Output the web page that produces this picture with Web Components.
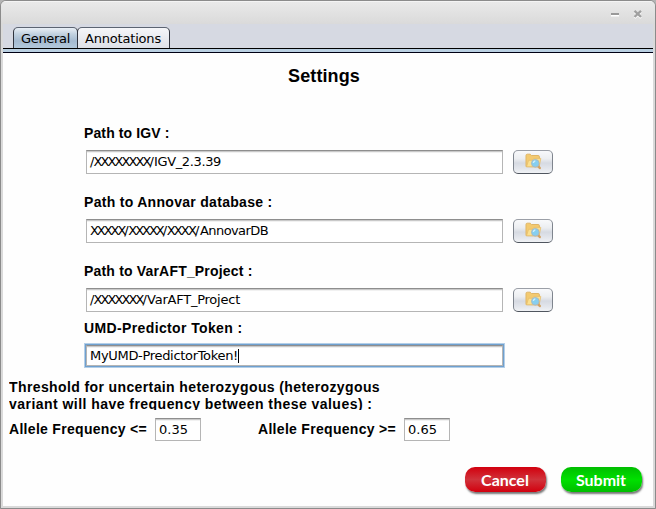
<!DOCTYPE html>
<html lang="en">
<head>
<meta charset="utf-8">
<title>Settings</title>
<style>
html,body{margin:0;height:100%;overflow:hidden;background:#b4b4b4}
</style>
</head>
<body>
<settings-window></settings-window>
<script>
class BaseElement extends HTMLElement {
  constructor() {
    super();
    this.attachShadow({ mode: 'open' }).innerHTML = this.render();
  }
}

/* One line of text; letter spacing is adjusted so that it spans the "span" attribute's width. */
customElements.define('fit-text', class extends BaseElement {
  render() {
    return `<style>:host{display:block;white-space:pre}span{display:inline-block}</style><span><slot></slot></span>`;
  }
  connectedCallback() {
    const want = parseFloat(this.getAttribute('span'));
    const s = this.shadowRoot.querySelector('span');
    const n = this.textContent.length;
    if (want && n) s.style.letterSpacing = ((want - s.getBoundingClientRect().width) / n).toFixed(3) + 'px';
  }
});

customElements.define('window-bar', class extends BaseElement {
  render() {
    return `<style>
    :host{display:flex;box-sizing:border-box;height:23px;justify-content:flex-end;padding:6px 11px 0 0;gap:11px;background:linear-gradient(#fff 0,#e9e9e9 1px,#dadada)}
    svg{display:block;width:12px;height:14px}
    </style>
    <svg viewBox="0 0 12 14"><path d="M2 8.5h8" stroke="#fff" stroke-width="2"/><path d="M2 7h8" stroke="#999" stroke-width="2"/></svg>
    <svg viewBox="0 0 12 14"><path d="M2.5 4.8l6.5 6.2M9 4.8l-6.5 6.2" stroke="#fff" stroke-width="2.3"/><path d="M2.5 3.8l6.5 6.2M9 3.8l-6.5 6.2" stroke="#a0a0a0" stroke-width="2.3"/></svg>`;
  }
});

customElements.define('tab-item', class extends BaseElement {
  render() {
    return `<style>
    :host{display:block;box-sizing:border-box;height:21px;border:1px solid #30343e;border-top-color:#5c6472;border-bottom:0;border-radius:5px 5px 0 0;padding:3px 0 0 7px;font:13px/16px "DejaVu Sans",sans-serif;color:#000;background:linear-gradient(#f5f6f9,#dde0e7)}
    :host([selected]){background:linear-gradient(#e9eff6 0,#c3d2e0 30%,#a4bad0 65%,#b3c9dc)}
    </style><slot></slot>`;
  }
});

customElements.define('tab-strip', class extends BaseElement {
  render() {
    return `<style>
    :host{display:flex;box-sizing:border-box;height:29px;padding:3px 0 0 10px;background:linear-gradient(#d6d9e2 24px,#000 24px 25px,#bad0e2 25px 28px,#000014 28px)}
    tab-item{width:93px;margin-left:-1px}
    tab-item[selected]{width:65px;margin-left:0}
    </style><tab-item selected><fit-text span="49">General</fit-text></tab-item><tab-item><fit-text span="76">Annotations</fit-text></tab-item>`;
  }
});

customElements.define('field-label', class extends BaseElement {
  render() {
    return `<style>:host{display:block;height:17px;font:bold 14px/17px "Liberation Sans",Arial,sans-serif;color:#000}</style><slot></slot>`;
  }
});

customElements.define('text-field', class extends BaseElement {
  render() {
    return `<style>
    :host{display:flex;box-sizing:border-box;height:24px;border:1px solid #b5b5b5;border-top-color:#8e8e8e;padding:3px 0 0 3px;background:linear-gradient(#c9c9c9 0 1px,#f1f1f1 1px 2px,#fff 2px);font:13px/16px "DejaVu Sans",sans-serif;color:#000}
    :host([focused]){box-shadow:0 0 0 1px #6fa0cf,0 0 0 2px #b4cfe8}
    i{display:none;width:1px;height:14px;margin-top:1px;background:#000}
    :host([focused]) i{display:block}
    </style><slot></slot><i></i>`;
  }
});

customElements.define('browse-button', class extends BaseElement {
  render() {
    return `<style>
    :host{display:flex;box-sizing:border-box;width:40px;height:24px;align-items:flex-start;justify-content:center;padding-top:2px;border:1px solid #7f858e;border-top-color:#9b9fa7;border-bottom-color:#50565f;border-radius:5px;background:linear-gradient(#f8f9fb,#eceef1 35%,#d6dae2 55%,#e3e6ec 80%,#f0f2f5)}
    svg{display:block;width:17px;height:17px}
    </style>
    <svg viewBox="0 0 17 17">
      <path d="M1 13.6V2.4Q1 1.2 2.3 1.2H5.2L6.4 2.5H13.2Q14.4 2.5 14.4 3.8V12.6L13.4 13.8Z" fill="#f3ca70" stroke="#dfb567"/>
      <path d="M1.5 13.8L3.6 7.3H7.6L8.8 5.4H15.8L14.2 13.8Z" fill="#fce08e" stroke="#e6be6d" stroke-width=".8"/>
      <path d="M13 13l1.8 2" stroke="#d3a364" stroke-width="2.4" stroke-linecap="round"/>
      <circle cx="10.3" cy="10.3" r="3.8" fill="#86cff0" stroke="#a9bac2"/>
      <path d="M8.3 10q.2-1.9 2-2" stroke="#cdefff" stroke-width="1.3" fill="none"/>
    </svg>`;
  }
});

customElements.define('path-row', class extends BaseElement {
  render() {
    return `<style>
    :host{display:block;height:69px}
    .r{display:flex;gap:10px;padding:8px 0 0 2px}
    text-field{width:417px}
    </style>
    <field-label><slot name="label"></slot></field-label>
    <div class="r"><text-field><slot></slot></text-field><browse-button></browse-button></div>`;
  }
});

customElements.define('action-button', class extends BaseElement {
  render() {
    return `<style>
    :host{display:flex;justify-content:center;box-sizing:border-box;padding-right:1px;width:81px;height:25px;border-radius:10px;font:bold 16px/25px Lato,sans-serif;color:#fff;background:linear-gradient(#d2000e,#d0333b 50%,#d2000e);box-shadow:1px 2px 2px #777}
    :host([kind=go]){background:linear-gradient(#00bd00,#00e000 50%,#00bd00)}
    </style><slot></slot>`;
  }
});

customElements.define('settings-window', class extends BaseElement {
  render() {
    return `<style>
    :host{display:flex;flex-direction:column;box-sizing:border-box;width:656px;height:509px;border:1px solid #8b8b8b;border-radius:6px 6px 0 0;background:#dadada;overflow:hidden}
    .body{flex:1;margin:0 2px 2px;display:flex;flex-direction:column;background:#fefefe;overflow:hidden}
    tab-strip{margin:0 2px;flex:none}
    window-bar{flex:none}
    h1{margin:12px 0 0 285px;font:bold 18px/22px "Liberation Sans",Arial,sans-serif;color:#000}
    .paths{margin:38px 0 0 81px}
    .token{margin:-12px 0 0 81px}
    .token text-field{width:417px;height:21px;margin:8px 0 0 2px;padding:2px 0 0 3px}
    .note{margin:13px 0 0 6px;height:31px;overflow:hidden;font:bold 14px/17px "Liberation Sans",Arial,sans-serif;color:#000}
    .range{display:flex;margin:8px 0 0 6px}
    .range field-label{width:146px;padding-top:3px}
    .range text-field{width:46px;height:23px}
    .range text-field + field-label{margin-left:57px}
    .actions{display:flex;justify-content:flex-end;gap:15px;margin:26px 11px 0 0}
    </style>
    <window-bar></window-bar>
    <tab-strip></tab-strip>
    <div class="body">
      <h1><fit-text span="72">Settings</fit-text></h1>
      <div class="paths">
        <path-row><fit-text slot="label" span="85.5">Path to IGV :</fit-text><fit-text span="3.5">/</fit-text><fit-text span="56">XXXXXXXX</fit-text><fit-text span="4.5">/</fit-text><fit-text span="67">IGV_2.3.39</fit-text></path-row>
        <path-row><fit-text slot="label" span="188.5">Path to Annovar database :</fit-text><fit-text span="34.3">XXXXX</fit-text><fit-text span="4">/</fit-text><fit-text span="34.3">XXXXX</fit-text><fit-text span="4">/</fit-text><fit-text span="28.4">XXXX</fit-text><fit-text span="5">/</fit-text><fit-text span="68">AnnovarDB</fit-text></path-row>
        <path-row><fit-text slot="label" span="168.5">Path to VarAFT_Project :</fit-text><fit-text span="3.5">/</fit-text><fit-text span="49">XXXXXXX</fit-text><fit-text span="4.5">/</fit-text><fit-text span="93">VarAFT_Project</fit-text></path-row>
      </div>
      <div class="token">
        <field-label><fit-text span="158.5">UMD-Predictor Token :</fit-text></field-label>
        <text-field focused><fit-text span="148">MyUMD-PredictorToken!</fit-text></text-field>
      </div>
      <div class="note">
        <fit-text span="371">Threshold for uncertain heterozygous (heterozygous</fit-text>
        <fit-text span="363.5">variant will have frequency between these values) :</fit-text>
      </div>
      <div class="range">
        <field-label><fit-text span="138">Allele Frequency &lt;=</fit-text></field-label><text-field><fit-text span="29">0.35</fit-text></text-field>
        <field-label><fit-text span="138">Allele Frequency &gt;=</fit-text></field-label><text-field><fit-text span="29">0.65</fit-text></text-field>
      </div>
      <div class="actions">
        <action-button>Cancel</action-button>
        <action-button kind="go">Submit</action-button>
      </div>
    </div>`;
  }
});
</script>
</body>
</html>
